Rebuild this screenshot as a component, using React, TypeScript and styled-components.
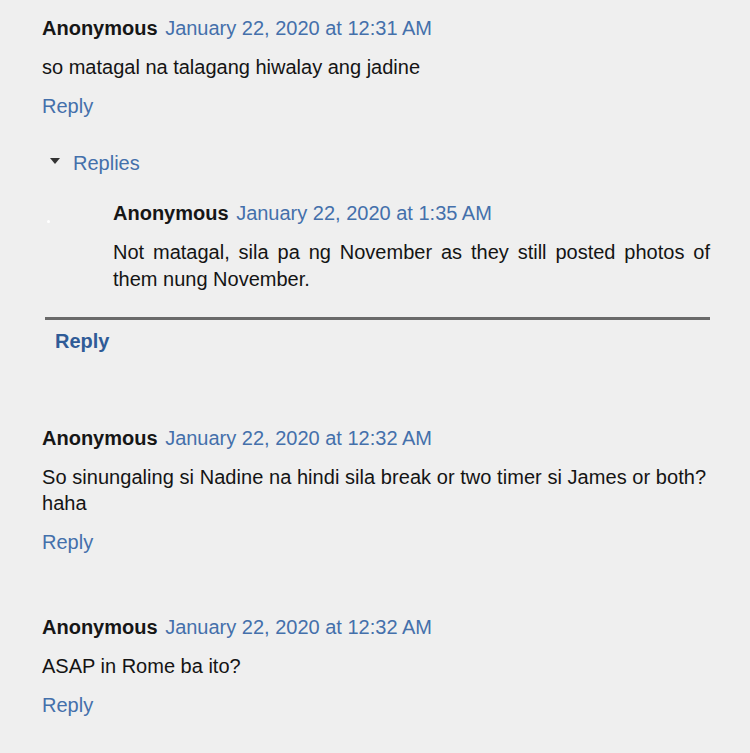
import styled, { createGlobalStyle } from "styled-components";

const GlobalStyle = createGlobalStyle`
    html, body {
        margin: 0;
        padding: 0;
        background: #efefef;
    }
    body {
        font-family: "Liberation Sans", Arial, sans-serif;
    }
`;

const Page = styled.div`
    width: 750px;
    height: 753px;
    box-sizing: border-box;
    padding: 15px 40px 0 42px;
    background: #efefef;
    overflow: hidden;
`;

const Comment = styled.div<{ $gap?: number }>`
    margin-top: ${(p) => p.$gap ?? 0}px;
`;

const Header = styled.div`
    font-size: 20px;
    line-height: 26px;
    white-space: nowrap;
`;

const Name = styled.span`
    font-weight: bold;
    color: #161616;
`;

const Date = styled.a`
    margin-left: 2px;
    color: #4470ab;
    text-decoration: none;
`;

const Body = styled.div<{ $lh?: number }>`
    margin-top: 13px;
    font-size: 20px;
    line-height: ${(p) => p.$lh ?? 26}px;
    color: #141414;
`;

const ReplyLink = styled.a`
    display: block;
    margin-top: 13px;
    font-size: 20px;
    line-height: 26px;
    color: #4470ab;
    text-decoration: none;
`;

const Replies = styled.div`
    margin-top: 31px;
    padding-left: 8px;
    display: flex;
    align-items: center;
    gap: 13px;
    font-size: 20px;
    line-height: 26px;
    color: #4470ab;
`;

const Triangle = styled.span`
    width: 0;
    height: 0;
    border-left: 5px solid transparent;
    border-right: 5px solid transparent;
    border-top: 6px solid #333;
    margin-top: -4px;
`;

const Thread = styled.div`
    margin-top: 24px;
    padding-left: 71px;
    position: relative;
`;

const Dot = styled.span`
    position: absolute;
    left: 5px;
    top: 20px;
    width: 3px;
    height: 3px;
    border-radius: 50%;
    background: #fff;
`;

const Justified = styled(Body)`
    text-align: justify;
`;

const Rule = styled.hr`
    margin: 24px 0 0 3px;
    border: none;
    height: 3px;
    background: #6a6a6a;
`;

const ThreadReply = styled.a`
    display: block;
    margin-top: 8px;
    padding-left: 13px;
    font-size: 20px;
    line-height: 26px;
    font-weight: bold;
    color: #2f5b97;
    text-decoration: none;
`;

const Wide = styled(Body)`
    letter-spacing: 0.05px;
`;

export default function App() {
    return (
        <Page>
            <GlobalStyle />
            <Comment>
                <Header>
                    <Name>Anonymous</Name> <Date>January 22, 2020 at 12:31 AM</Date>
                </Header>
                <Body>so matagal na talagang hiwalay ang jadine</Body>
                <ReplyLink>Reply</ReplyLink>
            </Comment>
            <Replies>
                <Triangle />
                Replies
            </Replies>
            <Thread>
                <Dot />
                <Header>
                    <Name>Anonymous</Name> <Date>January 22, 2020 at 1:35 AM</Date>
                </Header>
                <Justified $lh={27}>
                    Not matagal, sila pa ng November as they still posted photos of them nung November.
                </Justified>
            </Thread>
            <Rule />
            <ThreadReply>Reply</ThreadReply>
            <Comment $gap={71}>
                <Header>
                    <Name>Anonymous</Name> <Date>January 22, 2020 at 12:32 AM</Date>
                </Header>
                <Wide>
                    So sinungaling si Nadine na hindi sila break or two timer si James or both? haha
                </Wide>
                <ReplyLink>Reply</ReplyLink>
            </Comment>
            <Comment $gap={59}>
                <Header>
                    <Name>Anonymous</Name> <Date>January 22, 2020 at 12:32 AM</Date>
                </Header>
                <Body>ASAP in Rome ba ito?</Body>
                <ReplyLink>Reply</ReplyLink>
            </Comment>
        </Page>
    );
}
